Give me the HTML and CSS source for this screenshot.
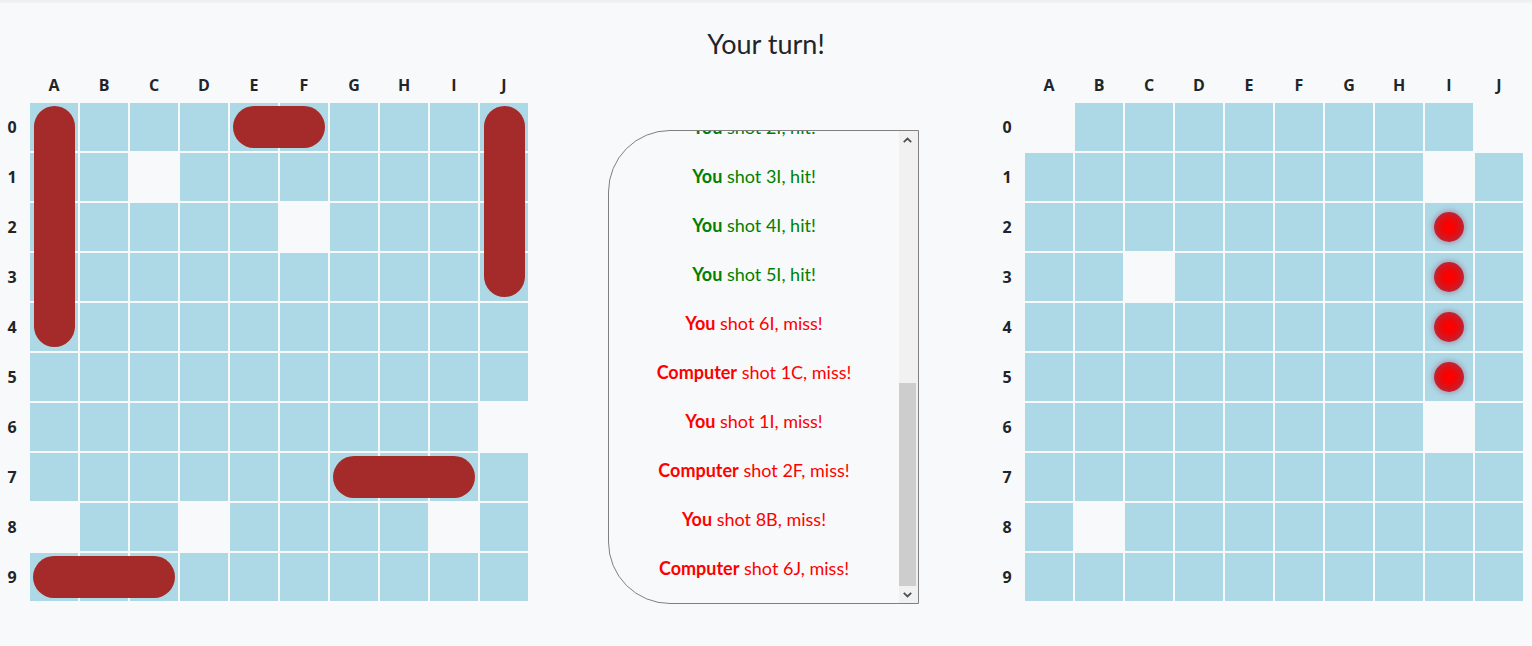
FILE: index.html
```html
<!DOCTYPE html>
<html lang="en">
<head>
<meta charset="utf-8">
<title>Battleship</title>
<link rel="stylesheet" href="styles.css">
</head>
<body>
<div class="topline"></div>
<h1 class="status">Your turn!</h1>
<main class="game">
  <section class="board">
    <span class="corner"></span>
    <span class="col">A</span><span class="col">B</span><span class="col">C</span><span class="col">D</span><span class="col">E</span><span class="col">F</span><span class="col">G</span><span class="col">H</span><span class="col">I</span><span class="col">J</span>
    <span class="row">0</span><i class="c"><b class="ship v5"></b></i><i class="c"></i><i class="c"></i><i class="c"></i><i class="c"><b class="ship h2"></b></i><i class="c"></i><i class="c"></i><i class="c"></i><i class="c"></i><i class="c"><b class="ship v4"></b></i>
    <span class="row">1</span><i class="c"></i><i class="c"></i><i class="c m"></i><i class="c"></i><i class="c"></i><i class="c"></i><i class="c"></i><i class="c"></i><i class="c"></i><i class="c"></i>
    <span class="row">2</span><i class="c"></i><i class="c"></i><i class="c"></i><i class="c"></i><i class="c"></i><i class="c m"></i><i class="c"></i><i class="c"></i><i class="c"></i><i class="c"></i>
    <span class="row">3</span><i class="c"></i><i class="c"></i><i class="c"></i><i class="c"></i><i class="c"></i><i class="c"></i><i class="c"></i><i class="c"></i><i class="c"></i><i class="c"></i>
    <span class="row">4</span><i class="c"></i><i class="c"></i><i class="c"></i><i class="c"></i><i class="c"></i><i class="c"></i><i class="c"></i><i class="c"></i><i class="c"></i><i class="c"></i>
    <span class="row">5</span><i class="c"></i><i class="c"></i><i class="c"></i><i class="c"></i><i class="c"></i><i class="c"></i><i class="c"></i><i class="c"></i><i class="c"></i><i class="c"></i>
    <span class="row">6</span><i class="c"></i><i class="c"></i><i class="c"></i><i class="c"></i><i class="c"></i><i class="c"></i><i class="c"></i><i class="c"></i><i class="c"></i><i class="c m"></i>
    <span class="row">7</span><i class="c"></i><i class="c"></i><i class="c"></i><i class="c"></i><i class="c"></i><i class="c"></i><i class="c"><b class="ship h3"></b></i><i class="c"></i><i class="c"></i><i class="c"></i>
    <span class="row">8</span><i class="c m"></i><i class="c"></i><i class="c"></i><i class="c m"></i><i class="c"></i><i class="c"></i><i class="c"></i><i class="c"></i><i class="c m"></i><i class="c"></i>
    <span class="row">9</span><i class="c"><b class="ship h3"></b></i><i class="c"></i><i class="c"></i><i class="c"></i><i class="c"></i><i class="c"></i><i class="c"></i><i class="c"></i><i class="c"></i><i class="c"></i>
  </section>

  <div class="log">
    <div class="log-list" id="log">
      <p class="entry miss"><b>You</b> shot 0A, miss!</p>
      <p class="entry miss"><b>Computer</b> shot 8A, miss!</p>
      <p class="entry miss"><b>You</b> shot 0J, miss!</p>
      <p class="entry miss"><b>Computer</b> shot 8D, miss!</p>
      <p class="entry miss"><b>You</b> shot 3C, miss!</p>
      <p class="entry miss"><b>Computer</b> shot 8I, miss!</p>
      <p class="entry hit"><b>You</b> shot 2I, hit!</p>
      <p class="entry hit"><b>You</b> shot 3I, hit!</p>
      <p class="entry hit"><b>You</b> shot 4I, hit!</p>
      <p class="entry hit"><b>You</b> shot 5I, hit!</p>
      <p class="entry miss"><b>You</b> shot 6I, miss!</p>
      <p class="entry miss"><b>Computer</b> shot 1C, miss!</p>
      <p class="entry miss"><b>You</b> shot 1I, miss!</p>
      <p class="entry miss"><b>Computer</b> shot 2F, miss!</p>
      <p class="entry miss"><b>You</b> shot 8B, miss!</p>
      <p class="entry miss"><b>Computer</b> shot 6J, miss!</p>
    </div>
    <div class="scrollbar" aria-hidden="true">
      <span class="sb-btn"><svg width="9" height="6" viewBox="0 0 9 6"><path d="M0.8 5.2 L4.5 1.5 L8.2 5.2" fill="none" stroke="#505050" stroke-width="1.8"/></svg></span>
      <span class="sb-track"><span class="sb-thumb"></span></span>
      <span class="sb-btn"><svg width="9" height="6" viewBox="0 0 9 6"><path d="M0.8 0.8 L4.5 4.5 L8.2 0.8" fill="none" stroke="#505050" stroke-width="1.8"/></svg></span>
    </div>
  </div>

  <section class="board board-right">
    <span class="corner"></span>
    <span class="col">A</span><span class="col">B</span><span class="col">C</span><span class="col">D</span><span class="col">E</span><span class="col">F</span><span class="col">G</span><span class="col">H</span><span class="col">I</span><span class="col">J</span>
    <span class="row">0</span><i class="c m"></i><i class="c"></i><i class="c"></i><i class="c"></i><i class="c"></i><i class="c"></i><i class="c"></i><i class="c"></i><i class="c"></i><i class="c m"></i>
    <span class="row">1</span><i class="c"></i><i class="c"></i><i class="c"></i><i class="c"></i><i class="c"></i><i class="c"></i><i class="c"></i><i class="c"></i><i class="c m"></i><i class="c"></i>
    <span class="row">2</span><i class="c"></i><i class="c"></i><i class="c"></i><i class="c"></i><i class="c"></i><i class="c"></i><i class="c"></i><i class="c"></i><i class="c"><b class="hit-dot"></b></i><i class="c"></i>
    <span class="row">3</span><i class="c"></i><i class="c"></i><i class="c m"></i><i class="c"></i><i class="c"></i><i class="c"></i><i class="c"></i><i class="c"></i><i class="c"><b class="hit-dot"></b></i><i class="c"></i>
    <span class="row">4</span><i class="c"></i><i class="c"></i><i class="c"></i><i class="c"></i><i class="c"></i><i class="c"></i><i class="c"></i><i class="c"></i><i class="c"><b class="hit-dot"></b></i><i class="c"></i>
    <span class="row">5</span><i class="c"></i><i class="c"></i><i class="c"></i><i class="c"></i><i class="c"></i><i class="c"></i><i class="c"></i><i class="c"></i><i class="c"><b class="hit-dot"></b></i><i class="c"></i>
    <span class="row">6</span><i class="c"></i><i class="c"></i><i class="c"></i><i class="c"></i><i class="c"></i><i class="c"></i><i class="c"></i><i class="c"></i><i class="c m"></i><i class="c"></i>
    <span class="row">7</span><i class="c"></i><i class="c"></i><i class="c"></i><i class="c"></i><i class="c"></i><i class="c"></i><i class="c"></i><i class="c"></i><i class="c"></i><i class="c"></i>
    <span class="row">8</span><i class="c"></i><i class="c m"></i><i class="c"></i><i class="c"></i><i class="c"></i><i class="c"></i><i class="c"></i><i class="c"></i><i class="c"></i><i class="c"></i>
    <span class="row">9</span><i class="c"></i><i class="c"></i><i class="c"></i><i class="c"></i><i class="c"></i><i class="c"></i><i class="c"></i><i class="c"></i><i class="c"></i><i class="c"></i>
  </section>
</main>
<script src="script.js"></script>
</body>
</html>
```

FILE: styles.css
```css
* { box-sizing: border-box; }

html, body {
  margin: 0;
  padding: 0;
  background: #f8f9fa;
  color: #212529;
  font-family: Lato, "Open Sans", "Noto Sans", sans-serif;
}

.topline {
  height: 3px;
  background: linear-gradient(#eceef0, #f3f4f6);
}

.status {
  margin: 26px 0 14px;
  font-size: 27px;
  line-height: 30px;
  font-weight: 400;
  text-align: center;
  color: #212529;
}

.game {
  display: flex;
  align-items: flex-start;
}

.board {
  display: grid;
  grid-template-columns: 28px repeat(10, 48px);
  grid-template-rows: 28px repeat(10, 48px);
  gap: 2px;
}

.board-right {
  margin-left: auto;
  margin-right: 9px;
}

.col, .row {
  font-family: "Open Sans", "Noto Sans", sans-serif;
  font-weight: 700;
  font-size: 16px;
  color: #212529;
  display: flex;
  justify-content: center;
}

.col {
  align-items: flex-start;
  line-height: 24px;
}

.row {
  align-items: center;
  padding-right: 4px;
}

.c {
  display: block;
  position: relative;
  background: #add8e6;
}

.c.m {
  background: transparent;
}

.ship {
  position: absolute;
  z-index: 1;
  background: #a52a2a;
  border-radius: 22px;
}

.ship.h2, .ship.h3 {
  left: 3px;
  top: 3px;
  height: 42px;
}
.ship.h2 { width: 92px; }
.ship.h3 { width: 142px; }

.ship.v4, .ship.v5 {
  left: 4px;
  top: 3px;
  width: 41px;
  border-radius: 21px;
}
.ship.v4 { height: 191px; }
.ship.v5 { height: 241px; }

.hit-dot {
  position: absolute;
  left: 9px;
  top: 9px;
  width: 30px;
  height: 30px;
  border-radius: 50%;
  background: radial-gradient(circle, #ff0000 0%, #f40404 28%, #d41620 55%, #b42c3c 75%, rgba(165, 110, 135, 0.75) 100%);
  box-shadow: 0 0 4px 2px rgba(165, 120, 145, 0.55);
}

.log {
  display: flex;
  margin-left: 80px;
  margin-top: 57px;
  width: 311px;
  height: 474px;
  border: 1px solid #808080;
  border-radius: 62px 0 0 62px;
  overflow: hidden;
  background: #f8f9fa;
}

.log-list {
  flex: 1;
  overflow: hidden;
  padding: 10px 0;
}

.scrollbar {
  width: 19px;
  flex: none;
  display: flex;
  flex-direction: column;
  background: #f1f1f1;
  padding-right: 2px;
}

.sb-btn {
  height: 17px;
  flex: none;
  display: flex;
  align-items: center;
  justify-content: center;
}

.sb-track {
  flex: 1;
  display: flex;
  flex-direction: column;
  justify-content: flex-end;
}

.sb-thumb {
  height: 203px;
  background: #cdcdcd;
}

.entry {
  margin: 0;
  padding: 12px 0;
  line-height: 25px;
  font-size: 18px;
  text-align: center;
}

.entry b { font-weight: 700; }

.entry.hit { color: #008000; }
.entry.miss { color: #ff0000; }
```

FILE: script.js
```js
document.addEventListener('DOMContentLoaded', function () {
  var log = document.getElementById('log');
  log.scrollTop = log.scrollHeight;
});
```
